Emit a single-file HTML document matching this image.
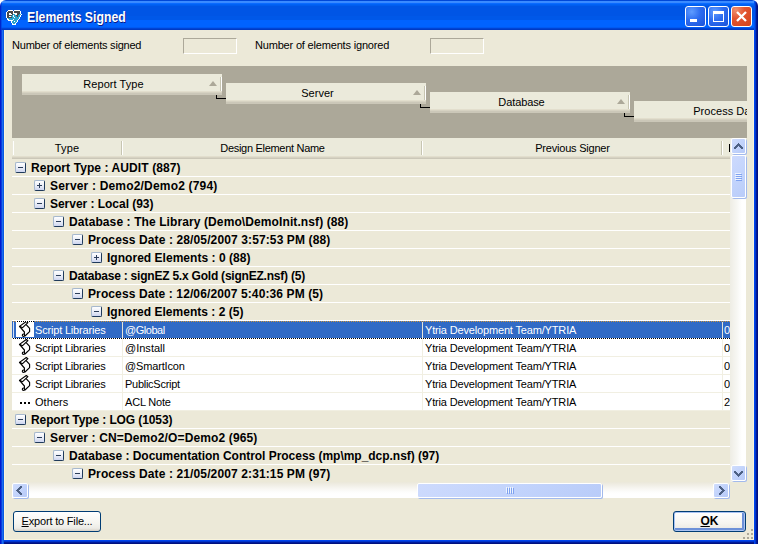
<!DOCTYPE html>
<html><head><meta charset="utf-8">
<style>
*{box-sizing:border-box}
html,body{margin:0;padding:0;width:758px;height:544px;overflow:hidden;background:#fff}
body{position:relative;font-family:"Liberation Sans",sans-serif;font-size:11px;color:#000}
.a{position:absolute}
svg{display:block}
#frame{left:0;top:24px;width:758px;height:520px;background:linear-gradient(90deg,#0019CF 0,#0019CF 1px,#0B3DDB 1px,#0B3DDB 2px,#1A6BF0 2px,#1A6BF0 3px,#0A58E0 3px,#0A58E0 4px,#F8F3DC 4px,#F8F3DC 5px,#ECE9D8 5px,#ECE9D8 753px,#F8F3DC 753px,#F8F3DC 754px,#0044EE 754px,#0044EE 755px,#0038CC 755px,#0038CC 756px,#001A9C 756px,#001A9C 757px,#00107E 757px)}
#bottom{left:4px;top:539px;width:750px;height:5px;background:linear-gradient(180deg,#F8F3DC 0,#F8F3DC 1px,#0044EE 1px,#0044EE 2px,#0034CC 2px,#0034CC 3px,#001A9C 3px,#001A9C 4px,#00107E 4px)}
#title{left:0;top:0;width:758px;height:30px;border-radius:6px 6px 0 0;
background:linear-gradient(90deg,#0025CC 0,#0025CC 1px,rgba(0,60,220,.6) 1px,rgba(0,60,220,.6) 2px,transparent 2px,transparent 754px,#0050EE 754px,#0050EE 755px,#003ACC 755px,#003ACC 756px,#001A9C 756px,#001A9C 757px,#00107E 757px),linear-gradient(180deg,#0048D8 0,#0048D8 1px,#3B8CFF 1px,#3B8CFF 2px,#3A8AFF 2px,#3A8AFF 3px,#0A6BFF 3px,#0A6BFF 4px,#0062F5 4px,#0062F5 5px,#005DEE 5px,#005DEE 6px,#0055E5 6px,#0055E5 16px,#0058E8 16px,#0058E8 20px,#0063FF 20px,#0063FF 27px,#005AF2 27px,#005AF2 28px,#0044D4 28px,#0044D4 29px,#003AC4 29px,#003AC4 30px)}
#tl{left:0;top:30px;width:4px;height:509px;background:linear-gradient(90deg,#0019CF 0,#0019CF 1px,#0B3DDB 1px,#0B3DDB 2px,#1A6BF0 2px,#1A6BF0 3px,#0A58E0 3px)}
.tt{color:#fff;font-weight:bold;font-size:14px;letter-spacing:0px;transform:scaleX(0.875);transform-origin:0 0;text-shadow:1px 1px 0 #0A1883;white-space:nowrap}
.tb{position:absolute;top:6px;width:21px;height:21px;border:1px solid #fff;border-radius:3px;background:radial-gradient(circle at 30% 25%,#5F9CFF 0,#2D6CF0 45%,#1A52D8 100%)}
.tb.x{background:radial-gradient(circle at 20% 15%,#F0906F 0,#E25430 40%,#D4431B 100%)}
.lbl{letter-spacing:-0.23px;white-space:nowrap}
.edit{background:#ECE9D8;border-top:1px solid #ACA899;border-left:1px solid #ACA899;border-bottom:1px solid #fff;border-right:1px solid #fff}
.tile{height:21px;background:linear-gradient(180deg,#EBEADB 0,#EBEADB 17px,#E2DECD 17px,#E2DECD 18px,#D6D2C2 18px,#D6D2C2 19px,#CBC7B8 19px,#CBC7B8 21px);white-space:nowrap;overflow:hidden}
.tile .tx{position:absolute;top:4px;text-align:center;letter-spacing:0.1px}
.arr{position:absolute;width:0;height:0;border-left:4.5px solid transparent;border-right:4.5px solid transparent;border-bottom:5px solid #ACA899}
.hdr{background:linear-gradient(180deg,#EBEADB 0,#EBEADB 18px,#E2DECD 18px,#E2DECD 19px,#D6D2C2 19px,#D6D2C2 20px,#CBC7B8 20px,#CBC7B8 21px)}
.sep{position:absolute;top:3px;width:2px;height:14px;background:linear-gradient(90deg,#C7C5B2 0,#C7C5B2 1px,#fff 1px)}
.row{position:absolute;left:0;width:718px;height:18px;border-bottom:1px solid #fff;background:#ECE9D8;white-space:nowrap}
.g{font-weight:bold;font-size:12px;letter-spacing:0.1px;position:absolute;top:2px}
.box{position:absolute;top:3px;width:11px;height:11px;border-radius:2px;border:1px solid;border-color:#A6B8CE #1F3A5C #1F3A5C #A6B8CE;background:linear-gradient(180deg,#fff 0,#E6EAF6 60%,#CDD5F0 100%)}
.box:before{content:"";position:absolute;left:2px;top:4px;width:5px;height:1px;background:#2C3E5A}
.box.p:after{content:"";position:absolute;left:4px;top:2px;width:1px;height:5px;background:#2C3E5A}
.drow{position:absolute;left:0;width:718px;height:18px;background:#fff;border-bottom:1px solid #F1EFE2;white-space:nowrap}
.drow.sel{background:#316AC5;color:#fff;border-bottom:1px solid #fff}
.focus{position:absolute;left:0;width:718px;height:1px}
.focus.t{top:0;background:repeating-linear-gradient(90deg,#316AC5 0,#316AC5 1px,#CE953A 1px,#CE953A 2px)}
.focus.tw{left:4px;top:0;width:18px;background:repeating-linear-gradient(90deg,#fff 0,#fff 1px,#000 1px,#000 2px)}
.focus.b{top:17px;background:repeating-linear-gradient(90deg,#fff 0,#fff 1px,#000 1px,#000 2px)}
.c{position:absolute;top:3px;letter-spacing:-0.2px}
.vl{position:absolute;top:0;width:1px;height:17px;background:#F1EFE2}
.sbtn{position:absolute;border:1px solid #fff;border-radius:2px;background:linear-gradient(135deg,#D0DDFD 0,#C2D3FB 50%,#B7CAF8 100%);box-shadow:1px 1px 0 #A3BAEC}
.thumb{position:absolute;border:1px solid #fff;border-radius:2px;background:linear-gradient(135deg,#CDDAFD 0,#C3D4FC 50%,#B9CCF9 100%);box-shadow:1px 1px 0 #A3BAEC}
.btn{position:absolute;border:1px solid #003C74;border-radius:3px;background:linear-gradient(180deg,#FFFFFF 0,#F5F4EF 60%,#ECEBE6 85%,#D6D0C5 100%);text-align:center;line-height:19px;white-space:nowrap}
</style></head><body>
<div id="frame" class="a"></div>
<div id="bottom" class="a"></div>
<div id="title" class="a"></div>
<svg class="a" style="left:5px;top:8px" width="18" height="18" shape-rendering="crispEdges"><rect x="3" y="2" width="5" height="1" fill="#FFFFFF"/><rect x="9" y="2" width="6" height="1" fill="#FFFFFF"/><rect x="2" y="3" width="1" height="1" fill="#FFFFFF"/><rect x="3" y="3" width="5" height="1" fill="#4A4A4A"/><rect x="8" y="3" width="1" height="1" fill="#FFFFFF"/><rect x="9" y="3" width="6" height="1" fill="#4A4A4A"/><rect x="15" y="3" width="1" height="1" fill="#FFFFFF"/><rect x="1" y="4" width="1" height="1" fill="#FFFFFF"/><rect x="2" y="4" width="6" height="1" fill="#4A4A4A"/><rect x="8" y="4" width="1" height="1" fill="#FFFFFF"/><rect x="9" y="4" width="6" height="1" fill="#4A4A4A"/><rect x="15" y="4" width="1" height="1" fill="#FFFFFF"/><rect x="1" y="5" width="1" height="1" fill="#FFFFFF"/><rect x="2" y="5" width="2" height="1" fill="#4A4A4A"/><rect x="4" y="5" width="2" height="1" fill="#FFFFFF"/><rect x="6" y="5" width="2" height="1" fill="#4A4A4A"/><rect x="8" y="5" width="4" height="1" fill="#FFFFFF"/><rect x="12" y="5" width="3" height="1" fill="#4A4A4A"/><rect x="15" y="5" width="1" height="1" fill="#FFFFFF"/><rect x="1" y="6" width="1" height="1" fill="#FFFFFF"/><rect x="2" y="6" width="2" height="1" fill="#4A4A4A"/><rect x="4" y="6" width="3" height="1" fill="#FFFFFF"/><rect x="7" y="6" width="1" height="1" fill="#4A4A4A"/><rect x="8" y="6" width="2" height="1" fill="#2AA3CC"/><rect x="10" y="6" width="2" height="1" fill="#FFFFFF"/><rect x="12" y="6" width="2" height="1" fill="#4A4A4A"/><rect x="14" y="6" width="2" height="1" fill="#2AA3CC"/><rect x="16" y="6" width="1" height="1" fill="#FFFFFF"/><rect x="1" y="7" width="1" height="1" fill="#FFFFFF"/><rect x="2" y="7" width="5" height="1" fill="#4A4A4A"/><rect x="7" y="7" width="1" height="1" fill="#2AA3CC"/><rect x="8" y="7" width="1" height="1" fill="#FFFFFF"/><rect x="9" y="7" width="2" height="1" fill="#2AA3CC"/><rect x="11" y="7" width="2" height="1" fill="#4A4A4A"/><rect x="13" y="7" width="2" height="1" fill="#2AA3CC"/><rect x="15" y="7" width="1" height="1" fill="#FFFFFF"/><rect x="1" y="8" width="1" height="1" fill="#FFFFFF"/><rect x="2" y="8" width="2" height="1" fill="#4A4A4A"/><rect x="4" y="8" width="2" height="1" fill="#FFFFFF"/><rect x="6" y="8" width="2" height="1" fill="#2AA3CC"/><rect x="8" y="8" width="1" height="1" fill="#FFFFFF"/><rect x="9" y="8" width="3" height="1" fill="#2AA3CC"/><rect x="12" y="8" width="1" height="1" fill="#4A4A4A"/><rect x="13" y="8" width="2" height="1" fill="#2AA3CC"/><rect x="15" y="8" width="1" height="1" fill="#FFFFFF"/><rect x="1" y="9" width="1" height="1" fill="#FFFFFF"/><rect x="2" y="9" width="5" height="1" fill="#4A4A4A"/><rect x="7" y="9" width="2" height="1" fill="#2AA3CC"/><rect x="9" y="9" width="1" height="1" fill="#FFFFFF"/><rect x="10" y="9" width="4" height="1" fill="#2AA3CC"/><rect x="14" y="9" width="1" height="1" fill="#FFFFFF"/><rect x="2" y="10" width="1" height="1" fill="#FFFFFF"/><rect x="3" y="10" width="11" height="1" fill="#2AA3CC"/><rect x="14" y="10" width="1" height="1" fill="#FFFFFF"/><rect x="2" y="11" width="2" height="1" fill="#FFFFFF"/><rect x="4" y="11" width="4" height="1" fill="#2AA3CC"/><rect x="8" y="11" width="1" height="1" fill="#FFFFFF"/><rect x="9" y="11" width="4" height="1" fill="#2AA3CC"/><rect x="13" y="11" width="1" height="1" fill="#FFFFFF"/><rect x="3" y="12" width="5" height="1" fill="#FFFFFF"/><rect x="8" y="12" width="4" height="1" fill="#2AA3CC"/><rect x="12" y="12" width="1" height="1" fill="#FFFFFF"/><rect x="6" y="13" width="1" height="1" fill="#FFFFFF"/><rect x="7" y="13" width="2" height="1" fill="#2AA3CC"/><rect x="9" y="13" width="1" height="1" fill="#FFFFFF"/><rect x="10" y="13" width="2" height="1" fill="#2AA3CC"/><rect x="12" y="13" width="1" height="1" fill="#FFFFFF"/><rect x="6" y="14" width="1" height="1" fill="#FFFFFF"/><rect x="7" y="14" width="4" height="1" fill="#2AA3CC"/><rect x="11" y="14" width="1" height="1" fill="#FFFFFF"/><rect x="7" y="15" width="1" height="1" fill="#FFFFFF"/><rect x="8" y="15" width="2" height="1" fill="#2AA3CC"/><rect x="10" y="15" width="1" height="1" fill="#FFFFFF"/><rect x="7" y="16" width="4" height="1" fill="#FFFFFF"/></svg>
<div class="a tt" style="left:27px;top:9px">Elements Signed</div>
<div class="tb" style="left:685px"><div class="a" style="left:4px;top:12px;width:7px;height:3px;background:#fff"></div></div>
<div class="tb" style="left:708px"><div class="a" style="left:4px;top:4px;width:11px;height:11px;border:1px solid #fff;border-top-width:3px"></div></div>
<div class="tb x" style="left:731px"><svg class="a" style="left:4px;top:4px" width="11" height="11"><path d="M1 1L10 10M10 1L1 10" stroke="#fff" stroke-width="2.3"/></svg></div>

<div class="a lbl" style="left:12px;top:39px;letter-spacing:-0.21px">Number of elements signed</div>
<div class="a edit" style="left:183px;top:38px;width:54px;height:16px"></div>
<div class="a lbl" style="left:255px;top:39px;letter-spacing:-0.18px">Number of elements ignored</div>
<div class="a edit" style="left:430px;top:38px;width:54px;height:16px"></div>

<div class="a" style="left:12px;top:66px;width:735px;height:72px;background:#ACA899;overflow:hidden">
  <div class="a tile" style="left:10px;top:8px;width:200px"><div class="tx" style="left:0;width:183px;letter-spacing:0.05px">Report Type</div><div class="arr" style="left:187px;top:7px"></div><div class="sep" style="left:198px"></div></div>
  <div class="a" style="left:204px;top:29px;width:1px;height:4px;background:#000"></div>
  <div class="a" style="left:204px;top:32px;width:10px;height:1px;background:#000"></div>
  <div class="a tile" style="left:214px;top:17px;width:200px"><div class="tx" style="left:0;width:183px;letter-spacing:0.02px">Server</div><div class="arr" style="left:187px;top:7px"></div><div class="sep" style="left:198px"></div></div>
  <div class="a" style="left:408px;top:38px;width:1px;height:4px;background:#000"></div>
  <div class="a" style="left:408px;top:41px;width:10px;height:1px;background:#000"></div>
  <div class="a tile" style="left:418px;top:26px;width:200px"><div class="tx" style="left:0;width:183px;letter-spacing:-0.1px">Database</div><div class="arr" style="left:187px;top:7px"></div><div class="sep" style="left:198px"></div></div>
  <div class="a" style="left:612px;top:47px;width:1px;height:4px;background:#000"></div>
  <div class="a" style="left:612px;top:50px;width:10px;height:1px;background:#000"></div>
  <div class="a tile" style="left:622px;top:35px;width:200px"><div class="tx" style="left:1px;width:183px;letter-spacing:0.05px">Process Date</div></div>
</div>

<div class="a hdr" style="left:12px;top:138px;width:718px;height:21px;overflow:hidden">
  <div class="a" style="left:1px;top:3px;width:1px;height:14px;background:#fff"></div>
  <div class="a" style="left:0;top:4px;width:110px;text-align:center;letter-spacing:0.11px">Type</div>
  <div class="sep" style="left:109px"></div>
  <div class="a" style="left:111px;top:4px;width:299px;text-align:center;letter-spacing:-0.3px">Design Element Name</div>
  <div class="sep" style="left:409px"></div>
  <div class="a" style="left:411px;top:4px;width:299px;text-align:center;letter-spacing:-0.21px">Previous Signer</div>
  <div class="sep" style="left:709px"></div>
  <div class="a" style="left:717px;top:6px;width:1px;height:8px;background:#000"></div>
</div>

<div class="a" style="left:12px;top:159px;width:718px;height:324px;overflow:hidden;background:#ECE9D8">
<div class="row" style="top:0px"><div class="box" style="left:3px"></div><div class="g" style="left:19px;letter-spacing:0.09px">Report Type : AUDIT (887)</div></div>
<div class="row" style="top:18px"><div class="box p" style="left:22px"></div><div class="g" style="left:38px;letter-spacing:0.18px">Server : Demo2/Demo2 (794)</div></div>
<div class="row" style="top:36px"><div class="box" style="left:22px"></div><div class="g" style="left:38px;letter-spacing:-0.03px">Server : Local (93)</div></div>
<div class="row" style="top:54px"><div class="box" style="left:41px"></div><div class="g" style="left:57px;letter-spacing:0.1px">Database : The Library (Demo\DemoInit.nsf) (88)</div></div>
<div class="row" style="top:72px"><div class="box" style="left:60px"></div><div class="g" style="left:76px;letter-spacing:0.12px">Process Date : 28/05/2007 3:57:53 PM (88)</div></div>
<div class="row" style="top:90px"><div class="box p" style="left:79px"></div><div class="g" style="left:95px;letter-spacing:0.03px">Ignored Elements : 0 (88)</div></div>
<div class="row" style="top:108px"><div class="box" style="left:41px"></div><div class="g" style="left:57px;letter-spacing:-0.22px">Database : signEZ 5.x Gold (signEZ.nsf) (5)</div></div>
<div class="row" style="top:126px"><div class="box" style="left:60px"></div><div class="g" style="left:76px;letter-spacing:0.11px">Process Date : 12/06/2007 5:40:36 PM (5)</div></div>
<div class="row" style="top:144px"><div class="box" style="left:79px"></div><div class="g" style="left:95px;letter-spacing:0.02px">Ignored Elements : 2 (5)</div></div>
<div class="row" style="top:252px"><div class="box" style="left:3px"></div><div class="g" style="left:19px;letter-spacing:-0.1px">Report Type : LOG (1053)</div></div>
<div class="row" style="top:270px"><div class="box" style="left:22px"></div><div class="g" style="left:38px;letter-spacing:0.13px">Server : CN=Demo2/O=Demo2 (965)</div></div>
<div class="row" style="top:288px"><div class="box" style="left:41px"></div><div class="g" style="left:57px;letter-spacing:-0.03px">Database : Documentation Control Process (mp\mp_dcp.nsf) (97)</div></div>
<div class="row" style="top:306px"><div class="box" style="left:60px"></div><div class="g" style="left:76px;letter-spacing:0.12px">Process Date : 21/05/2007 2:31:15 PM (97)</div></div>
<div class="drow sel" style="top:162px"><div class="a" style="left:1px;top:0;width:1px;height:17px;background:#D6E2F6"></div><div class="a" style="left:4px;top:1px;width:18px;height:15px;background:#fff"></div><svg class="a" style="left:4px;top:-1px" width="18" height="18" viewBox="0 0 18 18"><g fill="none" stroke="#000" stroke-width="1.15" stroke-linejoin="round" stroke-linecap="round"><path d="M3.5 6.4 L10.3 1.5 L11.9 2.7 L6.6 7.7 Z"/><path d="M3.5 6.4 L8.4 12 L8.4 14.2"/><path d="M10.4 4.8 L13.6 8.4 L13.6 11.6 L9 16"/><circle cx="7.5" cy="15.2" r="1.2"/></g></svg><div class="c" style="left:23px;letter-spacing:-0.18px">Script Libraries</div><div class="vl" style="left:110px;background:#E6E3D6"></div><div class="c" style="left:113px;letter-spacing:-0.47px">@Global</div><div class="vl" style="left:410px;background:#E6E3D6"></div><div class="c" style="left:413px;letter-spacing:-0.16px">Ytria Development Team/YTRIA</div><div class="vl" style="left:710px;background:#E6E3D6"></div><div class="c" style="left:712px">0</div><div class="focus t"></div><div class="focus tw"></div><div class="focus b"></div></div>
<div class="drow" style="top:180px"><svg class="a" style="left:4px;top:-1px" width="18" height="18" viewBox="0 0 18 18"><g fill="none" stroke="#000" stroke-width="1.15" stroke-linejoin="round" stroke-linecap="round"><path d="M3.5 6.4 L10.3 1.5 L11.9 2.7 L6.6 7.7 Z"/><path d="M3.5 6.4 L8.4 12 L8.4 14.2"/><path d="M10.4 4.8 L13.6 8.4 L13.6 11.6 L9 16"/><circle cx="7.5" cy="15.2" r="1.2"/></g></svg><div class="c" style="left:23px;letter-spacing:-0.18px">Script Libraries</div><div class="vl" style="left:110px"></div><div class="c" style="left:113px;letter-spacing:0.01px">@Install</div><div class="vl" style="left:410px"></div><div class="c" style="left:413px;letter-spacing:-0.16px">Ytria Development Team/YTRIA</div><div class="vl" style="left:710px"></div><div class="c" style="left:712px">0</div></div>
<div class="drow" style="top:198px"><svg class="a" style="left:4px;top:-1px" width="18" height="18" viewBox="0 0 18 18"><g fill="none" stroke="#000" stroke-width="1.15" stroke-linejoin="round" stroke-linecap="round"><path d="M3.5 6.4 L10.3 1.5 L11.9 2.7 L6.6 7.7 Z"/><path d="M3.5 6.4 L8.4 12 L8.4 14.2"/><path d="M10.4 4.8 L13.6 8.4 L13.6 11.6 L9 16"/><circle cx="7.5" cy="15.2" r="1.2"/></g></svg><div class="c" style="left:23px;letter-spacing:-0.18px">Script Libraries</div><div class="vl" style="left:110px"></div><div class="c" style="left:113px;letter-spacing:-0.15px">@SmartIcon</div><div class="vl" style="left:410px"></div><div class="c" style="left:413px;letter-spacing:-0.16px">Ytria Development Team/YTRIA</div><div class="vl" style="left:710px"></div><div class="c" style="left:712px">0</div></div>
<div class="drow" style="top:216px"><svg class="a" style="left:4px;top:-1px" width="18" height="18" viewBox="0 0 18 18"><g fill="none" stroke="#000" stroke-width="1.15" stroke-linejoin="round" stroke-linecap="round"><path d="M3.5 6.4 L10.3 1.5 L11.9 2.7 L6.6 7.7 Z"/><path d="M3.5 6.4 L8.4 12 L8.4 14.2"/><path d="M10.4 4.8 L13.6 8.4 L13.6 11.6 L9 16"/><circle cx="7.5" cy="15.2" r="1.2"/></g></svg><div class="c" style="left:23px;letter-spacing:-0.18px">Script Libraries</div><div class="vl" style="left:110px"></div><div class="c" style="left:113px;letter-spacing:-0.27px">PublicScript</div><div class="vl" style="left:410px"></div><div class="c" style="left:413px;letter-spacing:-0.16px">Ytria Development Team/YTRIA</div><div class="vl" style="left:710px"></div><div class="c" style="left:712px">0</div></div>
<div class="drow" style="top:234px"><svg class="a" style="left:8px;top:9px" width="12" height="3" shape-rendering="crispEdges"><rect x="0" y="0" width="2" height="2" fill="#000"/><rect x="4" y="0" width="2" height="2" fill="#000"/><rect x="8" y="0" width="2" height="2" fill="#000"/></svg><div class="c" style="left:23px;letter-spacing:0.05px">Others</div><div class="vl" style="left:110px"></div><div class="c" style="left:113px;letter-spacing:-0.19px">ACL Note</div><div class="vl" style="left:410px"></div><div class="c" style="left:413px;letter-spacing:-0.16px">Ytria Development Team/YTRIA</div><div class="vl" style="left:710px"></div><div class="c" style="left:712px">2</div></div>
</div>

<div class="a" style="left:730px;top:138px;width:16px;height:344px;background:linear-gradient(90deg,#EEEDE4 0,#F2F1EB 3px,#F7F7F3 7px,#FCFCFB 10px,#fff 12px,#fff 16px)"></div>
<div class="sbtn" style="left:731px;top:138px;width:15px;height:16px"></div><svg class="a" style="left:734px;top:143px" width="9" height="6" shape-rendering="crispEdges"><rect x="0" y="5" width="2" height="1" fill="#4D6185"/><rect x="7" y="5" width="2" height="1" fill="#4D6185"/><rect x="0" y="4" width="3" height="1" fill="#4D6185"/><rect x="6" y="4" width="3" height="1" fill="#4D6185"/><rect x="1" y="3" width="3" height="1" fill="#4D6185"/><rect x="5" y="3" width="3" height="1" fill="#4D6185"/><rect x="2" y="2" width="5" height="1" fill="#4D6185"/><rect x="3" y="1" width="3" height="1" fill="#4D6185"/><rect x="4" y="0" width="1" height="1" fill="#4D6185"/></svg>
<div class="thumb" style="left:731px;top:155px;width:15px;height:43px"></div>
<svg class="a" style="left:735px;top:173px" width="8" height="8" shape-rendering="crispEdges"><rect x="0" y="0" width="6" height="1" fill="#EEF4FE"/><rect x="0" y="2" width="6" height="1" fill="#EEF4FE"/><rect x="0" y="4" width="6" height="1" fill="#EEF4FE"/><rect x="0" y="6" width="6" height="1" fill="#EEF4FE"/><rect x="1" y="1" width="6" height="1" fill="#7FA2F0"/><rect x="1" y="3" width="6" height="1" fill="#7FA2F0"/><rect x="1" y="5" width="6" height="1" fill="#7FA2F0"/><rect x="1" y="7" width="6" height="1" fill="#7FA2F0"/></svg>
<div class="sbtn" style="left:731px;top:465px;width:15px;height:16px"></div><svg class="a" style="left:734px;top:471px" width="9" height="6" shape-rendering="crispEdges"><rect x="0" y="0" width="2" height="1" fill="#4D6185"/><rect x="7" y="0" width="2" height="1" fill="#4D6185"/><rect x="0" y="1" width="3" height="1" fill="#4D6185"/><rect x="6" y="1" width="3" height="1" fill="#4D6185"/><rect x="1" y="2" width="3" height="1" fill="#4D6185"/><rect x="5" y="2" width="3" height="1" fill="#4D6185"/><rect x="2" y="3" width="5" height="1" fill="#4D6185"/><rect x="3" y="4" width="3" height="1" fill="#4D6185"/><rect x="4" y="5" width="1" height="1" fill="#4D6185"/></svg>

<div class="a" style="left:12px;top:482px;width:718px;height:16px;background:linear-gradient(180deg,#EBE8DA 0,#F0EEE5 3px,#F8F7F3 7px,#FDFDFC 10px,#fff 12px,#fff 16px)"></div>
<div class="sbtn" style="left:12px;top:483px;width:16px;height:15px"></div><svg class="a" style="left:16px;top:486px" width="6" height="9" shape-rendering="crispEdges"><rect x="5" y="0" width="1" height="2" fill="#4D6185"/><rect x="5" y="7" width="1" height="2" fill="#4D6185"/><rect x="4" y="0" width="1" height="3" fill="#4D6185"/><rect x="4" y="6" width="1" height="3" fill="#4D6185"/><rect x="3" y="1" width="1" height="3" fill="#4D6185"/><rect x="3" y="5" width="1" height="3" fill="#4D6185"/><rect x="2" y="2" width="1" height="5" fill="#4D6185"/><rect x="1" y="3" width="1" height="3" fill="#4D6185"/><rect x="0" y="4" width="1" height="1" fill="#4D6185"/></svg>
<div class="thumb" style="left:417px;top:483px;width:185px;height:15px"></div>
<svg class="a" style="left:506px;top:487px" width="8" height="8" shape-rendering="crispEdges"><rect x="0" y="0" width="1" height="6" fill="#EEF4FE"/><rect x="2" y="0" width="1" height="6" fill="#EEF4FE"/><rect x="4" y="0" width="1" height="6" fill="#EEF4FE"/><rect x="6" y="0" width="1" height="6" fill="#EEF4FE"/><rect x="1" y="1" width="1" height="6" fill="#7FA2F0"/><rect x="3" y="1" width="1" height="6" fill="#7FA2F0"/><rect x="5" y="1" width="1" height="6" fill="#7FA2F0"/><rect x="7" y="1" width="1" height="6" fill="#7FA2F0"/></svg>
<div class="sbtn" style="left:713px;top:483px;width:16px;height:15px"></div><svg class="a" style="left:719px;top:486px" width="6" height="9" shape-rendering="crispEdges"><rect x="0" y="0" width="1" height="2" fill="#4D6185"/><rect x="0" y="7" width="1" height="2" fill="#4D6185"/><rect x="1" y="0" width="1" height="3" fill="#4D6185"/><rect x="1" y="6" width="1" height="3" fill="#4D6185"/><rect x="2" y="1" width="1" height="3" fill="#4D6185"/><rect x="2" y="5" width="1" height="3" fill="#4D6185"/><rect x="3" y="2" width="1" height="5" fill="#4D6185"/><rect x="4" y="3" width="1" height="3" fill="#4D6185"/><rect x="5" y="4" width="1" height="1" fill="#4D6185"/></svg>

<div class="btn" style="left:13px;top:511px;width:88px;height:21px;letter-spacing:-0.18px"><span style="text-decoration:underline">E</span>xport to File...</div>
<div class="btn" style="left:673px;top:511px;width:73px;height:21px;font-weight:bold;font-size:12px;box-shadow:inset 0 0 0 1px #A9C3F2,inset -1px -1px 0 2px #6C90D8"><span style="text-decoration:underline">O</span>K</div>
<svg class="a" style="left:743px;top:529px" width="10" height="10" shape-rendering="crispEdges"><rect x="8" y="0" width="2" height="2" fill="#ACA899"/><rect x="4" y="4" width="2" height="2" fill="#ACA899"/><rect x="8" y="4" width="2" height="2" fill="#ACA899"/><rect x="0" y="8" width="2" height="2" fill="#ACA899"/><rect x="4" y="8" width="2" height="2" fill="#ACA899"/><rect x="8" y="8" width="2" height="2" fill="#ACA899"/></svg>
</body></html>
